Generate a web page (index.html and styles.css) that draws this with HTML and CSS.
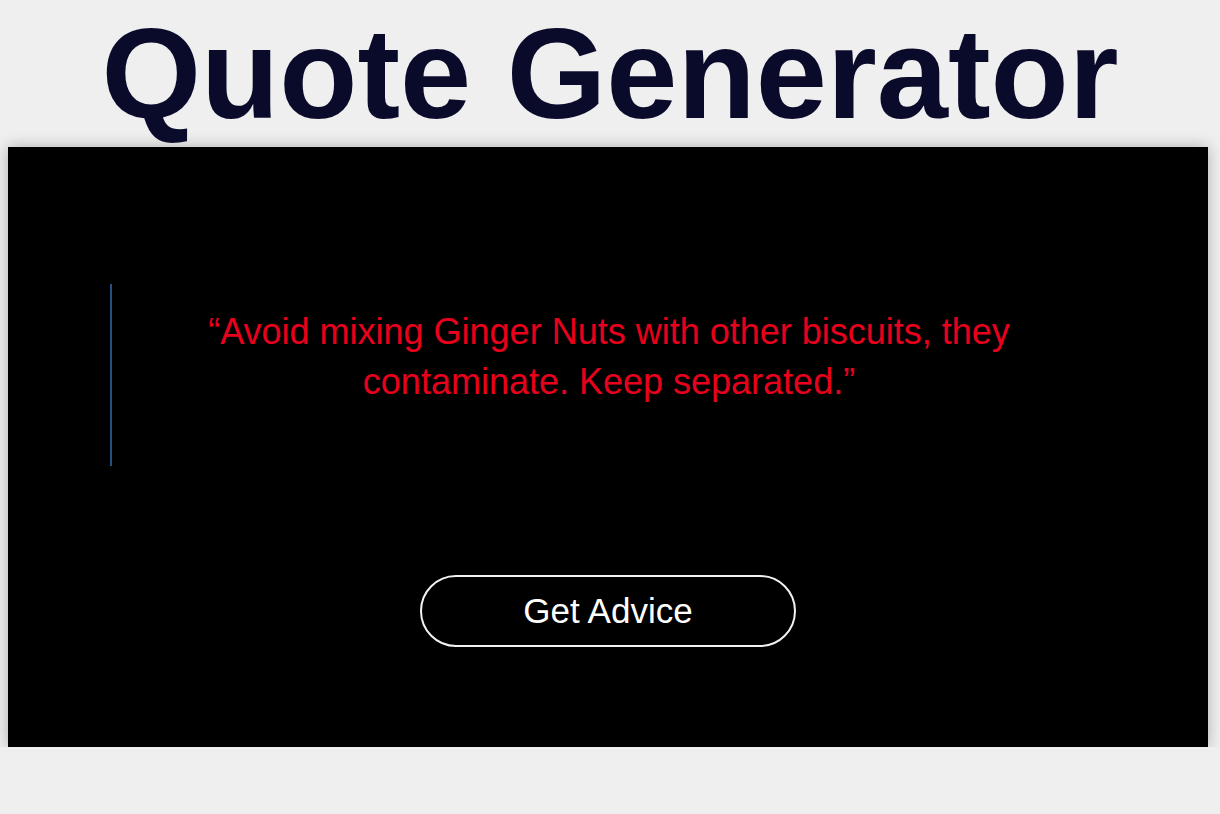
FILE: index.html
```html
<!DOCTYPE html>
<html lang="en">
<head>
<meta charset="utf-8">
<title>Quote Generator</title>
<link rel="stylesheet" href="styles.css">
</head>
<body>
<h1 class="title">Quote Generator</h1>
<main class="card">
  <blockquote class="quote">
    <p class="quote-text">“Avoid mixing Ginger Nuts with other biscuits, they contaminate. Keep separated.”</p>
  </blockquote>
  <button class="advice-btn" type="button">Get Advice</button>
</main>
</body>
</html>
```
FILE: styles.css
```css
html, body {
  margin: 0;
  padding: 0;
  background: #efefef;
  font-family: "Liberation Sans", Arial, sans-serif;
}

.title {
  margin: 0;
  text-align: center;
  font-size: 128px;
  font-weight: bold;
  line-height: normal;
  color: #0a0b2b;
}

.card {
  box-sizing: border-box;
  width: 1200px;
  height: 600px;
  margin: 0 8px;
  background: #000;
  box-shadow: 0 0 14px rgba(0, 0, 0, 0.28);
  display: flex;
  flex-direction: column;
  align-items: center;
  padding-top: 137px;
}

.quote {
  align-self: stretch;
  margin: 0 102px;
  border-left: 2px solid #25507f;
  padding: 23px 0 59px;
}

.quote-text {
  margin: 0;
  text-align: center;
  font-size: 36px;
  line-height: 50px;
  color: #e8001c;
}

.advice-btn {
  margin-top: 109px;
  width: 376px;
  height: 72px;
  box-sizing: border-box;
  border: 2px solid #f2f2f2;
  border-radius: 36px;
  background: #000;
  color: #fff;
  font-family: "Liberation Sans", Arial, sans-serif;
  font-size: 35px;
  cursor: pointer;
}
```
